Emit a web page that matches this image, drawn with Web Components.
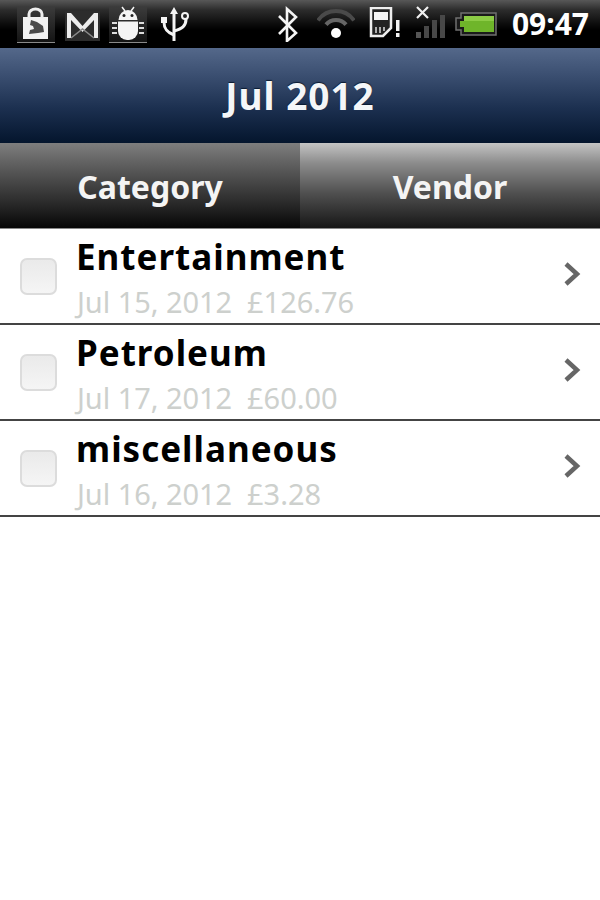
<!DOCTYPE html>
<html>
<head>
<meta charset="utf-8">
<title>Jul 2012</title>
<style>
  html, body { margin: 0; padding: 0; background: #fff; }
  body { width: 600px; height: 900px; overflow: hidden; font-family: "Noto Sans", "Open Sans", sans-serif; }
</style>
</head>
<body>
<status-bar></status-bar>
<title-bar>Jul 2012</title-bar>
<tab-bar>
  <tab-item>Category</tab-item>
  <tab-item selected>Vendor</tab-item>
</tab-bar>
<expense-row name="Entertainment" detail="Jul 15, 2012  £126.76"></expense-row>
<expense-row name="Petroleum" detail="Jul 17, 2012  £60.00"></expense-row>
<expense-row name="miscellaneous" detail="Jul 16, 2012  £3.28"></expense-row>

<script>
class StatusBar extends HTMLElement {
  constructor() {
    super();
    this.attachShadow({ mode: 'open' }).innerHTML = `
      <style>
        :host {
          display: flex; align-items: center; height: 48px; box-sizing: border-box;
          background: linear-gradient(#585858 0, #2c2c2c 10px, #0c0c0c 24px, #000 30px);
          padding-left: 17px; padding-right: 11px;
        }
        svg { display: block; flex: none; }
        .chip { background: linear-gradient(#3c3c3c, #141414); border-bottom: 1px solid #8a8a8a; }
        .left { display: flex; align-items: center; }
        .right { display: flex; align-items: center; margin-left: auto; }
        .time { font: 700 30px "Noto Sans", sans-serif; color: #fff; margin-left: 15px; line-height: 48px; }
      </style>
      <div class="left">
        <svg class="chip" width="38" height="36" viewBox="0 0 38 36">
          <path d="M6 11h25v22H6z" fill="#f2f2f2"/>
          <path d="M12 12V8a6.500 5 0 0 1 13 0v4" fill="none" stroke="#eee" stroke-width="3"/>
          <path d="M14 14l6 2 6 4 1 6-6 1-9 1 1-4 4-1-1-3-3-1z" fill="#4a4a4a"/>
        </svg>
        <svg width="38" height="36" viewBox="0 0 38 36" style="margin-left:8px">
          <path d="M2 5h35v30H2z" fill="#2c2c2c"/>
          <path d="M4 7h4l11.500 13L31 7h4v25h-4V14L19.500 26 8 14v18H4z" fill="#ececec"/>
          <path d="M8 32l11.500-9L31 32" fill="none" stroke="#8a8a8a" stroke-width="1.500"/>
        </svg>
        <svg class="chip" width="38" height="36" viewBox="0 0 38 36" style="margin-left:8px">
          <path d="M9.500 14a9.500 10 0 0 1 19 0z" fill="#f4f4f4"/>
          <path d="M13 1l3 4M25 1l-3 4" stroke="#f4f4f4" stroke-width="1.500"/>
          <path d="M9 15.500h20v9.500a9 9 0 0 1-9 9h-2a9 9 0 0 1-9-9z" fill="#f4f4f4"/>
          <path d="M3 17h5M3 22h5M3 27h5M30 17h5M30 22h5M30 27h5" stroke="#ddd" stroke-width="2"/>
          <circle cx="15" cy="9.500" r="1.500" fill="#222"/><circle cx="23" cy="9.500" r="1.500" fill="#222"/>
        </svg>
        <svg width="30" height="38" viewBox="0 0 30 38" style="margin-left:13px">
          <path d="M14 2l4 7h-2.500v27h-3V9H10z" fill="#f4f4f4"/>
          <path d="M14 30C6 27 4 23 4 17" fill="none" stroke="#f4f4f4" stroke-width="3"/>
          <path d="M14 26c8-2 12-5 12-12" fill="none" stroke="#f4f4f4" stroke-width="3"/>
          <rect x="1" y="12" width="6" height="6" fill="#f4f4f4"/>
          <circle cx="25" cy="11" r="3" fill="#222" stroke="#f4f4f4" stroke-width="2"/>
        </svg>
      </div>
      <div class="right">
        <svg width="22" height="36" viewBox="0 0 22 36">
          <path d="M2 10l17 17-9 8V3l9 8L2 28" fill="none" stroke="#f4f4f4" stroke-width="2.600"/>
        </svg>
        <svg width="38" height="30" viewBox="0 0 38 30" style="margin-left:18px">
          <path d="M1 11.400a22 22 0 0 1 36 0" fill="none" stroke="#4a4a4a" stroke-width="4"/>
          <path d="M9 15.600a13 13 0 0 1 20 0" fill="none" stroke="#666" stroke-width="4"/>
          <circle cx="19" cy="24" r="5" fill="#fff"/>
        </svg>
        <svg width="32" height="32" viewBox="0 0 32 32" style="margin-left:14px;margin-top:-3px">
          <path d="M2 1h20v20l-8 8H2z" fill="#222" stroke="#eee" stroke-width="2.500"/>
          <rect x="5" y="5" width="14" height="8" fill="#f4f4f4"/>
          <path d="M7 20v6M11 20v6M15 20v4" stroke="#ddd" stroke-width="1.500"/>
          <rect x="27" y="13" width="3.500" height="11" fill="#f4f4f4"/>
          <rect x="27" y="26" width="3.500" height="4" fill="#f4f4f4"/>
        </svg>
        <svg width="30" height="34" viewBox="0 0 30 34" style="margin-left:14px;margin-top:-4px">
          <path d="M2 2l11 11M13 2L2 13" stroke="#f0f0f0" stroke-width="2.200"/>
          <rect x="1" y="27" width="5" height="6" fill="#555"/>
          <rect x="9" y="21" width="5" height="12" fill="#484848"/>
          <rect x="17" y="15" width="5" height="18" fill="#484848"/>
          <rect x="25" y="10" width="5" height="23" fill="#484848"/>
        </svg>
        <svg width="42" height="24" viewBox="0 0 42 24" style="margin-left:10px">
          <path d="M6 1h35v22H6v-5H1V6h5z" fill="#1a1a1a" stroke="#707070" stroke-width="1.500"/>
          <path d="M9 4h30v16H9v-5H5V9h4z" fill="#6fb52a"/>
          <rect x="9" y="4" width="30" height="5" fill="#8ccb45"/>
        </svg>
        <span class="time">09:47</span>
      </div>`;
  }
}

class TitleBar extends HTMLElement {
  constructor() {
    super();
    this.attachShadow({ mode: 'open' }).innerHTML = `
      <style>
        :host {
          display: flex; align-items: center; justify-content: center; height: 95px;
          background: linear-gradient(#54688a 0, #3a4e70 28px, #1c3050 60px, #04152d 95px);
          color: #f4f6f8; font: 700 37px "Noto Sans", sans-serif; letter-spacing: 1px;
          text-shadow: 0 -1px 1px #0a1a30;
        }
      </style>
      <slot></slot>`;
  }
}

class TabBar extends HTMLElement {
  constructor() {
    super();
    this.attachShadow({ mode: 'open' }).innerHTML = `
      <style>
        :host { display: flex; height: 85px; border-bottom: 1px solid #888; }
      </style>
      <slot></slot>`;
  }
}

class TabItem extends HTMLElement {
  constructor() {
    super();
    this.attachShadow({ mode: 'open' }).innerHTML = `
      <style>
        :host {
          flex: 1; display: flex; align-items: center; justify-content: center; padding-top: 2px; box-sizing: border-box;
          background: linear-gradient(#7e7e7e 0, #5a5a5a 25px, #2a2a2a 60px, #060606 85px);
          color: #f4f4f4; font: 700 32px "Noto Sans", sans-serif;
        }
        :host([selected]) {
          background: linear-gradient(#c4c4c4 0, #8c8c8c 20px, #505050 50px, #161616 85px);
        }
      </style>
      <slot></slot>`;
  }
}

class ExpenseRow extends HTMLElement {
  constructor() {
    super();
    const root = this.attachShadow({ mode: 'open' });
    root.innerHTML = `
      <style>
        :host {
          display: flex; align-items: center; height: 94px;
          border-bottom: 2px solid #444; background: #fff; padding-left: 20px; padding-right: 18px;
        }
        .check {
          width: 37px; height: 37px; box-sizing: border-box; border-radius: 7px; flex: none;
          border: 2px solid #dcdcdc; background: linear-gradient(#eaeaea, #f5f5f5);
          margin-right: 19px;
        }
        .text { flex: 1; min-width: 0; align-self: flex-start; }
        .name { font: 700 35px/40px "Noto Sans", sans-serif; color: #000; letter-spacing: 1px; margin-top: 8px; }
        .detail { font: 400 29px/34px "Noto Sans", sans-serif; color: #cdd0cd; white-space: pre; margin-top: 8px; margin-left: 1px; letter-spacing: -0.05px; }
        svg { display: block; flex: none; margin-top: -4px; }
      </style>
      <div class="check"></div>
      <div class="text">
        <div class="name"></div>
        <div class="detail"></div>
      </div>
      <svg width="20" height="26" viewBox="0 0 20 26"><path d="M4 3l11 10L4 23" fill="none" stroke="#666" stroke-width="4.500"/></svg>`;
    root.querySelector('.name').textContent = this.getAttribute('name');
    root.querySelector('.detail').textContent = this.getAttribute('detail');
  }
}

customElements.define('status-bar', StatusBar);
customElements.define('title-bar', TitleBar);
customElements.define('tab-bar', TabBar);
customElements.define('tab-item', TabItem);
customElements.define('expense-row', ExpenseRow);
</script>
</body>
</html>
